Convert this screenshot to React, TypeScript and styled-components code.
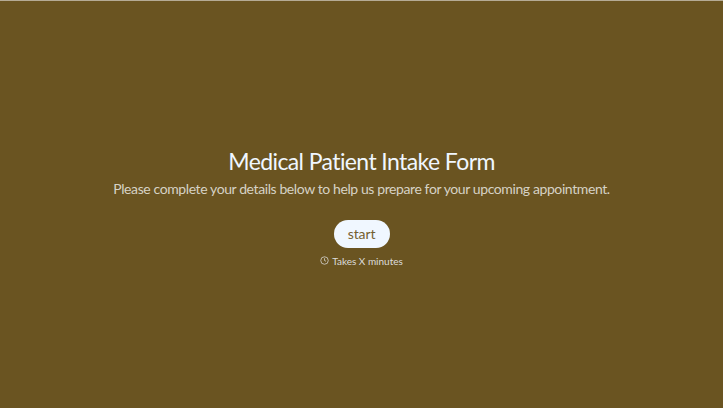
import React from "react";
import styled, { createGlobalStyle } from "styled-components";

const Global = createGlobalStyle`
  html, body { margin: 0; padding: 0; height: 100%; }
  #root { height: 100%; }
`;

const Page = styled.main`
  height: 408px;
  background: #6a5421;
  border-top: 1px solid #b5ab95;
  display: flex;
  flex-direction: column;
  align-items: center;
  justify-content: center;
  font-family: "Lato", "Open Sans", sans-serif;
  padding-top: 3px;
  box-sizing: border-box;
`;

const Title = styled.h1`
  margin: 0;
  font-size: 23px;
  line-height: 32px;
  font-weight: 400;
  letter-spacing: -0.6px;
  color: #f0f7ff;
`;

const Subtitle = styled.p`
  margin: 0 0 21px;
  padding-top: 2px;
  font-size: 14px;
  line-height: 20px;
  letter-spacing: -0.4px;
  color: #d6d2c5;
`;

const StartButton = styled.button`
  width: 56px;
  height: 28px;
  border: none;
  border-radius: 14px;
  background: #f0f7ff;
  color: #75602f;
  font: inherit;
  font-size: 14px;
  letter-spacing: -0.1px;
`;

const Duration = styled.div`
  margin-top: 6px;
  display: flex;
  align-items: center;
  gap: 3px;
  font-size: 10px;
  line-height: 14px;
  color: #dcdcdc;
`;

export default function App() {
  return (
    <Page>
      <Global />
      <Title>Medical Patient Intake Form</Title>
      <Subtitle>Please complete your details below to help us prepare for your upcoming appointment.</Subtitle>
      <StartButton>start</StartButton>
      <Duration>
        <svg width="9" height="9" viewBox="0 0 24 24" fill="none" stroke="currentColor" strokeWidth="2">
          <circle cx="12" cy="12" r="10" />
          <path d="M12 6v6l4 2" />
        </svg>
        Takes X minutes
      </Duration>
    </Page>
  );
}
